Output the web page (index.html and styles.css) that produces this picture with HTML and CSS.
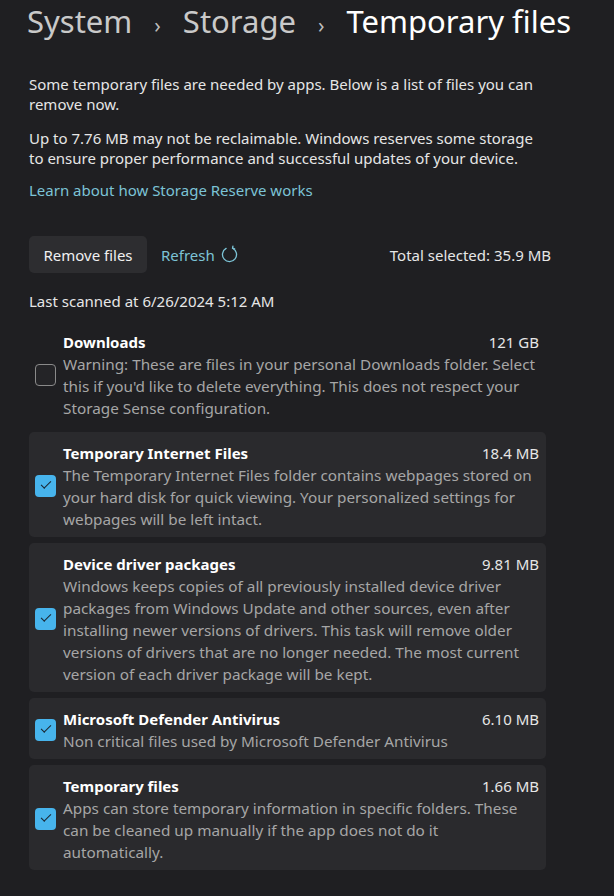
FILE: index.html
```html
<!DOCTYPE html>
<html lang="en">
<head>
    <meta charset="UTF-8">
    <title>Temporary files</title>
    <link rel="stylesheet" href="styles.css">
</head>
<body>
    <div class="page">
        <h1 class="breadcrumb">
            <span class="crumb">System</span>
            <span class="chevron">&#x203A;</span>
            <span class="crumb">Storage</span>
            <span class="chevron">&#x203A;</span>
            <span class="crumb current">Temporary files</span>
        </h1>

        <p class="intro">Some temporary files are needed by apps. Below is a list of files you can remove now.</p>
        <p class="intro">Up to 7.76 MB may not be reclaimable. Windows reserves some storage to ensure proper performance and successful updates of your device.</p>
        <a class="link" href="#">Learn about how Storage Reserve works</a>

        <div class="toolbar">
            <button class="btn">Remove files</button>
            <a class="refresh" href="#">Refresh
                <svg width="19" height="19" viewBox="0 0 20 20" fill="none" stroke="currentColor" stroke-width="1.4" stroke-linecap="round" stroke-linejoin="round">
                    <path d="M13.2 3.4 A7.4 7.4 0 1 1 6.4 3.6"/>
                    <path d="M13.6 1.2 L13.2 3.4 L15.4 4.2"/>
                </svg>
            </a>
            <span class="total">Total selected: 35.9 MB</span>
        </div>

        <p class="scanned">Last scanned at 6/26/2024 5:12 AM</p>

        <div class="items">
            <div class="item plain">
                <span class="check"></span>
                <div class="item-body">
                    <div class="item-head"><span class="item-title">Downloads</span><span class="item-size">121 GB</span></div>
                    <p class="item-desc">Warning: These are files in your personal Downloads folder. Select this if you'd like to delete everything. This does not respect your Storage Sense configuration.</p>
                </div>
            </div>

            <div class="item">
                <span class="check on"></span>
                <div class="item-body">
                    <div class="item-head"><span class="item-title">Temporary Internet Files</span><span class="item-size">18.4 MB</span></div>
                    <p class="item-desc">The Temporary Internet Files folder contains webpages stored on your hard disk for quick viewing. Your personalized settings for webpages will be left intact.</p>
                </div>
            </div>

            <div class="item">
                <span class="check on"></span>
                <div class="item-body">
                    <div class="item-head"><span class="item-title">Device driver packages</span><span class="item-size">9.81 MB</span></div>
                    <p class="item-desc">Windows keeps copies of all previously installed device driver packages from Windows Update and other sources, even after installing newer versions of drivers. This task will remove older versions of drivers that are no longer needed. The most current version of each driver package will be kept.</p>
                </div>
            </div>

            <div class="item">
                <span class="check on"></span>
                <div class="item-body">
                    <div class="item-head"><span class="item-title">Microsoft Defender Antivirus</span><span class="item-size">6.10 MB</span></div>
                    <p class="item-desc">Non critical files used by Microsoft Defender Antivirus</p>
                </div>
            </div>

            <div class="item">
                <span class="check on"></span>
                <div class="item-body">
                    <div class="item-head"><span class="item-title">Temporary files</span><span class="item-size">1.66 MB</span></div>
                    <p class="item-desc">Apps can store temporary information in specific folders. These can be cleaned up manually if the app does not do it automatically.</p>
                </div>
            </div>
        </div>
    </div>
</body>
</html>
```

FILE: styles.css
```css
* {
    margin: 0;
    padding: 0;
    box-sizing: border-box;
}

body {
    background: #1f1f22;
    color: #e6e6e6;
    font-family: 'Noto Sans', 'Open Sans', sans-serif;
    font-size: 15px;
    line-height: 20px;
}

.page {
    width: 614px;
    height: 896px;
    padding: 0 63px 0 29px;
    overflow: hidden;
}

/* breadcrumb */
.breadcrumb {
    display: flex;
    align-items: baseline;
    margin-left: -2px;
    padding-top: 3px;
    font-size: 31px;
    line-height: 36px;
    font-weight: 400;
    color: #c9c9c9;
    white-space: nowrap;
}

.chevron {
    font-size: 21px;
    margin: 0 22px;
    color: #bdbdbd;
}

.current {
    color: #ffffff;
}

.intro {
    margin-top: 31px;
}

.intro + .intro {
    margin-top: 14px;
}

.link {
    display: block;
    margin-top: 12px;
    color: #7cc3d6;
    text-decoration: none;
}

/* toolbar */
.toolbar {
    display: flex;
    align-items: center;
    margin-top: 36px;
    height: 37px;
}

.btn {
    height: 37px;
    width: 118px;
    border: none;
    border-radius: 5px;
    background: #2d2d30;
    color: #f0f0f0;
    font-family: inherit;
    font-size: 15px;
}

.refresh {
    display: flex;
    align-items: center;
    gap: 5px;
    margin-left: 14px;
    color: #7cc3d6;
    text-decoration: none;
}

.total {
    margin-left: auto;
}

.scanned {
    margin-top: 18px;
}

/* file list */
.items {
    display: flex;
    flex-direction: column;
    gap: 6px;
    margin-top: 10px;
    margin-right: 5px;
}

.item {
    display: flex;
    align-items: center;
    gap: 7px;
    padding: 10px 7px 7px 6px;
    background: #2a2a2d;
    border-radius: 5px;
}

.item.plain {
    background: transparent;
}

.check {
    flex: none;
    position: relative;
    width: 21px;
    height: 22px;
    border-radius: 4px;
    border: 1px solid #8a8a8a;
    background: #242427;
}

.check.on {
    border: none;
    background: #47b4ec;
}

.check.on::after {
    content: '';
    position: absolute;
    left: 6px;
    top: 6px;
    width: 9px;
    height: 4px;
    border-left: 1.3px solid #1a2530;
    border-bottom: 1.3px solid #1a2530;
    transform: rotate(-45deg);
}

.item-body {
    flex: 1;
}

.item-head {
    display: flex;
    justify-content: space-between;
    line-height: 22px;
}

.item-title {
    font-weight: 700;
    color: #ffffff;
}

.item-size {
    color: #e6e6e6;
}

.item-desc {
    color: #a6a6a6;
    font-size: 15.3px;
    line-height: 22px;
}
```
